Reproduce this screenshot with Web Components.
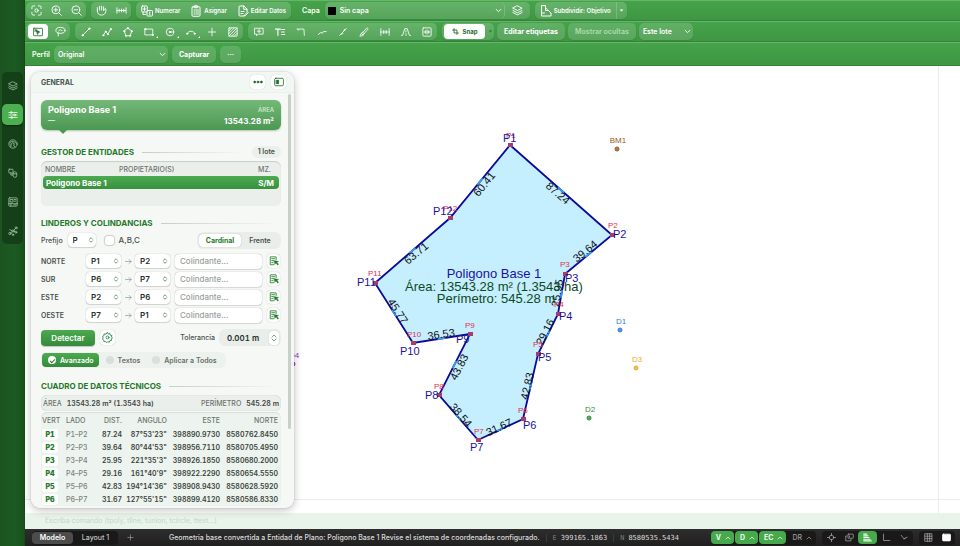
<!DOCTYPE html>
<html lang="es">
<head>
<meta charset="utf-8">
<meta name="viewport" content="width=device-width, initial-scale=1">
<title>Poligono Base 1</title>
<style>
  html, body { height: 100%; margin: 0; }
  body { font-family: Inter, "Liberation Sans", sans-serif; font-size: 7px; color: #3b423d; overflow: hidden; }
</style>
</head>
<body>
<app-shell></app-shell>
<script>
const RESET = `
  * { box-sizing: border-box; }
  button, input, select { font: inherit; color: inherit; margin: 0; padding: 0; border: 0; background: none; outline: none; }
  button { cursor: pointer; }
`;

const ICONS = {
  focus: '<path d="M2 8V5a3 3 0 0 1 3-3h3M16 2h3a3 3 0 0 1 3 3v3M22 16v3a3 3 0 0 1-3 3h-3M8 22H5a3 3 0 0 1-3-3v-3"/><circle cx="12" cy="12" r="3.6"/>',
  zoomin: '<circle cx="10.5" cy="10.5" r="8.5"/><path d="M17 17l5.500 5.500M10.500 6.500v8M6.500 10.500h8"/>',
  zoomout: '<circle cx="10.5" cy="10.5" r="8.5"/><path d="M17 17l5.500 5.500M6.500 10.500h8"/>',
  hand: '<path d="M3 13V5.500M7.800 11V3M12.200 11V2.500M16.600 11V4M3 12c0 7 3 10 9 10 5 0 9-3 9.500-8V8.500c-2-1.500-3.500 0-4.900 3.500"/>',
  measure: '<path d="M2 6v12M22 6v12M3 12h18M7 9v6M12 9v6M17 9v6"/>',
  number: '<rect x="1.500" y="2" width="11" height="12" rx="1.500"/><rect x="12" y="11" width="11" height="11" rx="1.500"/><path d="M7 5v6M4.500 8h5M17.500 14v5M4 14v5h5"/>',
  assign: '<rect x="4" y="3.500" width="16" height="19" rx="2"/><path d="M9 1.500h6v4H9zM8 10h2M12 10h5M8 14h2M12 14h5M8 18h2M12 18h5"/>',
  editdoc: '<path d="M20 13V8l-6-6H6a2 2 0 0 0-2 2v16a2 2 0 0 0 2 2h8M13.500 2v6.500H20M8 13h6M8 17h4M15 20l6-6 1.500 1.500-6 6H15z"/>',
  chevron: '<path d="M4 8l8 8 8-8"/>',
  up: '<path d="M4 16l8-8 8 8"/>',
  caret: '<path d="M3 7h18l-9 10z" fill="currentColor" stroke="none"/>',
  updown: '<path d="M6 9l6-6 6 6M6 15l6 6 6-6"/>',
  layers: '<path d="M12 2l10 5-10 5L2 7zM2 12l10 5 10-5M2 16.500l10 5 10-5"/>',
  subdivide: '<path d="M3 2v20h19v-6L11 5.500V2zM3 16h6M11 6v5h5"/>',
  select: '<rect x="1" y="3" width="22" height="18" rx="1.500"/><path d="M5 7h4M5 7v4"/><path d="M8 8l8 4-3.500 1.200L11.500 17z" fill="currentColor"/>',
  lasso: '<ellipse cx="12" cy="9.500" rx="10" ry="6.500"/><path d="M7 15c-2 3 2 3 0 7M8 10.500c3-3 6-3 8 0"/>',
  line: '<path d="M4 20L20 4"/><circle cx="4" cy="20" r="1.800" fill="currentColor"/><circle cx="20" cy="4" r="1.800" fill="currentColor"/>',
  polyline: '<path d="M3 20l6-9 5 6 7-12"/><circle cx="3" cy="20" r="1.500" fill="currentColor"/><circle cx="9" cy="11" r="1.500" fill="currentColor"/><circle cx="14" cy="17" r="1.500" fill="currentColor"/><circle cx="21" cy="5" r="1.500" fill="currentColor"/>',
  polygon: '<path d="M12 3l9 7-4 11H7L3 10z"/><circle cx="12" cy="3" r="1.600" fill="currentColor"/><circle cx="21" cy="10" r="1.600" fill="currentColor"/><circle cx="3" cy="10" r="1.600" fill="currentColor"/><circle cx="7" cy="21" r="1.600" fill="currentColor"/><circle cx="17" cy="21" r="1.600" fill="currentColor"/>',
  rect: '<path d="M3 5h18v14H3z"/><circle cx="3" cy="5" r="1.600" fill="currentColor"/><circle cx="21" cy="19" r="1.600" fill="currentColor"/>',
  circle: '<circle cx="12" cy="12" r="9"/><path d="M12 12h9"/><circle cx="12" cy="12" r="2" fill="currentColor"/>',
  arc: '<path d="M3 16c2-8 16-8 18 0"/><circle cx="3" cy="16" r="1.600" fill="currentColor"/><circle cx="21" cy="16" r="1.600" fill="currentColor"/>',
  cross: '<path d="M12 3v18M3 12h18"/>',
  hatch: '<rect x="2" y="2" width="20" height="20" rx="1"/><path d="M2 9l7-7M2 15.500L15.500 2M2 22L22 2M8.500 22L22 8.500M15 22l7-7"/>',
  comment: '<path d="M2 3h20v14H10l-4 4v-4H2zM12 6v8M8 10h8"/>',
  text: '<path d="M1 5h12M7 5v15M16 6h7M16 12h6M16 18h7" stroke-width="2.600"/>',
  corner: '<path d="M3 5h16l1 15M3 5l3 3"/>',
  extend: '<path d="M3 18l6-5 4 2 2-4h7"/>',
  slash: '<path d="M4 20L20 4M9 18l3-3M14 8l3-3"/>',
  brush: '<path d="M9 13l9-10c2-1.500 4.500.5 3 3L12 16M9 13l3 3-3 5-7 1 3-6zM6 15l3 4"/>',
  align: '<path d="M2 4v16M22 4v16M2 12h20M9 8v8M15 8v8"/>',
  road: '<path d="M1 20h3L9 4h2M23 20h-3L15 4h-2M12 9v3M12 16v4"/>',
  distribute: '<rect x="2" y="2" width="20" height="20" rx="2"/><path d="M12 7v10M5 12h5M14 12h5M8 9v6M16 9v6"/>',
  snap: '<path d="M7 2v15h15M2 7h15v15" stroke-width="3"/>',
  dots: '<circle cx="4" cy="12" r="2.200" fill="currentColor"/><circle cx="12" cy="12" r="2.200" fill="currentColor"/><circle cx="20" cy="12" r="2.200" fill="currentColor"/>',
  sliders: '<path d="M2 6h20M2 12h20M2 18h20"/><circle cx="8" cy="6" r="2.300"/><circle cx="16" cy="12" r="2.300"/><circle cx="9" cy="18" r="2.300"/>',
  globe: '<circle cx="12" cy="12" r="10"/><path d="M4 9c4-4 12-4 16 1M7 13l4-4 5 3-3 2 3 5M7 12v7"/>',
  shapes: '<rect x="2" y="3" width="10" height="9" rx="1"/><path d="M12 14h9v4a4 4 0 0 1-9 0zM13 14v-3a4 4 0 0 1 7 0v3M7 12v5h4"/>',
  board: '<rect x="2" y="2" width="20" height="20" rx="1.500"/><path d="M6 6h6v6H6zM15 6h4M15 10h4M2 16h20M7 16v6M14 19h5"/>',
  nodes: '<circle cx="4.500" cy="18" r="2.800"/><circle cx="12" cy="12" r="2.600"/><circle cx="19.500" cy="4.500" r="2.400"/><circle cx="19" cy="15" r="2.200"/><circle cx="12" cy="21" r="1.800"/><path d="M7 16l3-2M14 10l4-4M14.500 13l2.500 1M4 9l5 2"/>',
  panel: '<rect x="1.500" y="3" width="21" height="18" rx="3"/><path d="M6 8h5v8H6z" fill="currentColor"/>',
  pick: '<path d="M17 9V2H3v19h8M6.500 6.500h7M6.500 11h4M6.500 16h3"/><path d="M12 11l11 2-4 2 4 5-2 2-4-5-3 3z" fill="currentColor" stroke-width="1"/>',
  gear: '<circle cx="12" cy="12" r="3.200"/><path d="M12 1.500l2 3 3.500-1.200.6 3.600 3.700.8-1.300 3.400L23 13l-3 2 .8 3.500-3.600.3L16 22.300 12.500 21 10 23.500l-2-3-3.500.8-.5-3.600-3-1.700 1.500-3.300L1 9.500l3.300-1.600.2-3.700 3.700.4z"/>',
  arrow: '<path d="M2 12h19M14 5l7 7-7 7"/>',
  plus: '<path d="M12 3v18M3 12h18"/>',
  target: '<circle cx="12" cy="12" r="6"/><path d="M12 1v6M12 17v6M1 12h6M17 12h6"/>',
  copies: '<rect x="8" y="3" width="14" height="11" rx="1"/><path d="M5 8H2v13h14v-4M12 8v3"/>',
  stack: '<path d="M2 3h8M2 7.500h11M2 12h14M2 16.500h17M2 21h20" stroke-width="3"/>',
  ortho: '<path d="M4 3v17h17"/>',
  polar: '<path d="M3 6l8 10 8-5M11 16l3-3"/>',
  grid: '<path d="M3 2h18v20H3zM3 8.500h18M3 15h18M9 2v20M15 2v20"/>',
  screen: '<rect x="1" y="3" width="22" height="18" rx="3" fill="currentColor"/>'
};

class UiIcon extends HTMLElement {
  connectedCallback() {
    this.attachShadow({ mode: 'open' }).innerHTML = `
      <style>
        :host { display: inline-block; flex: none; width: var(--icon-size, 12px); height: var(--icon-size, 12px); }
        svg { display: block; width: 100%; height: 100%; fill: none; stroke: currentColor; stroke-width: var(--icon-stroke, 2); stroke-linecap: round; stroke-linejoin: round; }
      </style>
      <svg viewBox="0 0 24 24" aria-hidden="true">${ICONS[this.getAttribute('name')]}</svg>`;
  }
}

class ToolRow extends HTMLElement {
  connectedCallback() {
    this.attachShadow({ mode: 'open' }).innerHTML = `
      <style>
        :host { display: flex; box-sizing: border-box; align-items: center; gap: 5px; height: 21px; padding-left: 1px; color: #fff;
                background: linear-gradient(#45a34a, #3f9644); border-top: 1px solid #66b569; border-bottom: 1px solid #34853a; }
        :host([tall]) { height: 24px; gap: 4px; }
      </style><slot></slot>`;
  }
}

class ToolGroup extends HTMLElement {
  connectedCallback() {
    this.attachShadow({ mode: 'open' }).innerHTML = `
      <style>
        :host { display: flex; align-items: stretch; height: 17px; border-radius: 5px;
                background: linear-gradient(#ffffff2e, #ffffff1f); box-shadow: 0 1px 1px #1b5e2030; }
        :host([plain]) { background: none; box-shadow: none; gap: 3px; }
      </style><slot></slot>`;
  }
}

class ToolButton extends HTMLElement {
  connectedCallback() {
    const icon = this.getAttribute('icon');
    const label = this.getAttribute('label');
    this.attachShadow({ mode: 'open' }).innerHTML = `
      <style>${RESET}
        :host { display: flex; flex: none; position: relative; width: 20px; --icon-size: 11px; }
        :host([w21]) { width: 21px; --icon-size: 10px; }
        :host([wide]) { width: 25px; }
        :host([labelled]) { width: auto; --icon-size: 12px; }
        :host([chip]) { width: auto; height: 17px; border-radius: 5px; background: #ffffff26; box-shadow: 0 1px 1px #1b5e2030; }
        :host([muted]) { color: #a9d6ab; }
        :host([slim]) { width: 11px; --icon-size: 5px; border-left: 1px solid #ffffff30; }
        :host([dim]) { width: 7px; --icon-size: 5px; color: #2c7a33; }
        :host([active]) { width: auto; margin: 1px 2px; --icon-size: 10px; }
        button { flex: 1; display: flex; align-items: center; justify-content: center; gap: 3px; white-space: nowrap; }
        :host([labelled]) button { padding: 0 5px; font-size: 6px; font-weight: 600; gap: 2px; }
        :host([chip]) button { padding: 0 7px; font-size: 7px; font-weight: 700; }
        :host([active]) button { width: 20px; background: #fff; color: #1f6b28; border-radius: 4px; }
        :host([active][labelled]) button { width: 41px; padding: 0; --icon-size: 7px; gap: 4px; font-weight: 700; }
        i { position: absolute; right: 1px; bottom: 2px; border: 1px solid transparent; border-right-color: currentColor; border-bottom-color: currentColor; }
      </style>
      <button type="button" aria-label="${label}">${icon ? `<ui-icon name="${icon}"></ui-icon>` : ''}${this.hasAttribute('labelled') || (this.hasAttribute('chip') && !icon) ? `<span>${label}</span>` : ''}</button>
      ${this.hasAttribute('more') ? '<i></i>' : ''}`;
  }
}

class DropDown extends HTMLElement {
  connectedCallback() {
    const panel = this.hasAttribute('panel');
    this.attachShadow({ mode: 'open' }).innerHTML = `
      <style>${RESET}
        :host { display: flex; box-sizing: border-box; align-items: center; position: relative; height: 17px; border-radius: 5px; font-weight: 600; --icon-size: 7px; --icon-stroke: 3; }
        :host([chip]) { background: #ffffff26; box-shadow: 0 1px 1px #1b5e2030; }
        :host([panel]) { height: 14px; border-radius: 4px; background: #fff; color: #26302a; font-size: 8px; --icon-size: 6px; box-shadow: 0 0 1px #00000060, 0 1px 1px #00000020; }
        select { appearance: none; flex: 1; min-width: 0; height: 100%; padding: 0 12px 0 4px; }
        :host([panel]) select { padding: 0 10px 0 5px; }
        option { color: #222; }
        ui-icon { position: absolute; right: 2px; pointer-events: none; }
        :host([panel]) ui-icon { color: #2e7d32; }
      </style>
      <slot></slot>
      <select aria-label="${this.getAttribute('label')}"><option>${this.getAttribute('value')}</option></select>
      <ui-icon name="${panel ? 'updown' : 'chevron'}"></ui-icon>`;
  }
}

class SideRail extends HTMLElement {
  connectedCallback() {
    const items = [['layers', 'Capas'], ['sliders', 'Propiedades'], ['globe', 'Mapa'], ['shapes', 'Formas'], ['board', 'Lámina'], ['nodes', 'Puntos']];
    this.attachShadow({ mode: 'open' }).innerHTML = `
      <style>${RESET}
        :host { display: block; background: linear-gradient(90deg, #1b5420, #1c5a22 60%, #19501e); padding: 72px 2px 0; box-shadow: inset -1px 0 0 #174a1b; }
        nav { display: grid; gap: 8px; padding: 3px 0; border-radius: 5px; background: #153f19; justify-items: center; }
        button { width: 21px; height: 21px; display: grid; place-items: center; border-radius: 5px; color: #a5c9a7; --icon-size: 10px; --icon-stroke: 1.800; }
        button.on { background: #4caf50; color: #effbef; box-shadow: 0 1px 2px #0006; }
      </style>
      <nav>${items.map(([n, t], i) => `<button type="button" class="${i === 1 ? 'on' : ''}" aria-label="${t}"><ui-icon name="${n}"></ui-icon></button>`).join('')}</nav>`;
  }
}

class SurveyPlan extends HTMLElement {
  connectedCallback() {
    /* vertex: x, y, blue tag x/y, red tag x/y */
    const V = [
      [510, 145, 503, 142, 506, 138], [612, 235, 613, 238, 608, 228], [565, 274, 565, 282, 560, 267], [558, 314, 559, 320, 554, 307],
      [538, 354, 538, 361, 533, 347], [523, 419, 523, 429, 518, 413], [478, 440, 470, 451, 474, 434], [439, 395, 425, 399, 434, 389],
      [470, 334, 456, 343, 465, 328], [413, 343, 400, 355, 407, 337], [375, 283, 357, 286, 368, 276], [450, 218, 433, 215, 443, 211]
    ];
    const D = [
      ['87.24', 558, 193, 41], ['39.64', 585, 251, -39], ['25.95', 557, 293, -81], ['29.16', 545, 332, -63], ['42.83', 527, 386, -77], ['31.67', 499, 427, -25],
      ['38.54', 461, 415, 49], ['43.83', 459, 367, -63], ['36.53', 441, 334, -8], ['45.77', 398, 311, 57], ['63.71', 416, 253, -40], ['60.41', 484, 184, -51]
    ];
    const M = [['BM1', 617, 149, '#9b5a28'], ['D1', 620, 330, '#2f7de0'], ['D3', 636, 368, '#f0aa2c'], ['D2', 589, 418, '#2f9138'], ['D4', 293, 364, '#9a2fc0']];
    const glow = V.map((a, i) => {
      const b = V[(i + 1) % 12], mx = (a[0] + b[0]) / 2, my = (a[1] + b[1]) / 2, L = Math.hypot(b[0] - a[0], b[1] - a[1]);
      const ux = (b[0] - a[0]) / L * 4, uy = (b[1] - a[1]) / L * 4;
      return `<path d="M${mx - ux} ${my - uy}L${mx + ux} ${my + uy}"/>`;
    }).join('');
    this.attachShadow({ mode: 'open' }).innerHTML = `
      <style>
        :host { display: block; background: #fff; overflow: hidden; }
        svg { display: block; width: 100%; height: 100%; font-family: "Liberation Sans", Arial, sans-serif; }
        .dim { font-size: 11px; fill: #111; text-anchor: middle; }
        .blue { font-size: 11px; fill: #1a149c; }
        .red { font-size: 8px; fill: #e0304f; }
        .mark { font-size: 8px; text-anchor: middle; }
        .title { font-size: 13px; text-anchor: middle; }
      </style>
      <svg role="img" aria-label="Plano"><g transform="translate(-25 -66)">
        <path d="M25 499.500H4000M938.500 66V4000" stroke="#e9eeea" fill="none"/>
        <path d="M${V.map(v => v[0] + ' ' + v[1]).join('L')}Z" fill="#c5eefe" stroke="#0b0b9a" stroke-width="1.800"/>
        <g stroke="#38a0f2" stroke-width="1.800">${glow}</g>
        ${V.map(v => `<rect x="${v[0] - 2}" y="${v[1] - 2}" width="5" height="4" fill="#a83c68"/>`).join('')}
        ${D.map(d => `<text class="dim" transform="translate(${d[1]} ${d[2]}) rotate(${d[3]})" y="4">${d[0]}</text>`).join('')}
        <text class="title" x="494" y="278" fill="#1a149c">Poligono Base 1</text>
        <text class="title" x="494" y="291" fill="#0d4a1c">Área: 13543.28 m² (1.3543 ha)</text>
        <text class="title" x="496" y="303" fill="#0d4a1c">Perímetro: 545.28 m</text>
        ${V.map((v, i) => `<text class="red" x="${v[4]}" y="${v[5]}">P${i + 1}</text><text class="blue" x="${v[2]}" y="${v[3]}">P${i + 1}</text>`).join('')}
        ${M.map(m => `<circle cx="${m[1]}" cy="${m[2]}" r="2" fill="${m[3]}" fill-opacity=".8" stroke="${m[3]}" stroke-width="1"/><text class="mark" x="${m[1] + 1}" y="${m[2] - 6}" fill="${m[3]}">${m[0]}</text>`).join('')}
      </g></svg>`;
  }
}

class SectionTitle extends HTMLElement {
  connectedCallback() {
    this.attachShadow({ mode: 'open' }).innerHTML = `
      <style>
        :host { display: flex; align-items: center; gap: 8px; height: 12px; }
        h2 { margin: 0; font-size: 8px; line-height: 12px; font-weight: 700; color: #1f7a2a; }
        hr { flex: 1; height: 1px; margin: 0; border: 0; background: linear-gradient(90deg, #c3d0c6, #c3d0c600); }
      </style><h2>${this.getAttribute('heading')}</h2><hr><slot></slot>`;
  }
}

class EntityCard extends HTMLElement {
  connectedCallback() {
    this.attachShadow({ mode: 'open' }).innerHTML = `
      <style>
        :host { display: grid; box-sizing: border-box; grid-template-columns: 1fr auto; align-items: center; position: relative; height: 30px; padding: 4px 7px; border-radius: 6px; color: #fff;
                background: linear-gradient(#74b878, #4b9852); box-shadow: 0 1px 2px #1b5e2050; }
        :host::after { content: ""; position: absolute; left: 18px; top: 30px; border: 4px solid transparent; border-top-color: #4b9852; border-bottom: 0; }
        b { font-size: 9px; line-height: 12px; }
        small { font-size: 6px; line-height: 12px; color: #d9eedb; text-align: right; }
        span { font-size: 7px; line-height: 10px; }
        strong { font-size: 8px; line-height: 10px; text-align: right; }
      </style><b>Poligono Base 1</b><small>ÁREA</small><span>—</span><strong>13543.28 m²</strong>`;
  }
}

class EntityList extends HTMLElement {
  connectedCallback() {
    this.attachShadow({ mode: 'open' }).innerHTML = `
      <style>${RESET}
        :host { display: block; box-sizing: border-box; height: 45px; margin-top: 3px; padding: 1px 2px; border-radius: 6px; background: #ebefec; box-shadow: inset 0 1px 1px #00000025; }
        table { width: 100%; border-collapse: separate; border-spacing: 0; table-layout: fixed; }
        th { height: 14px; padding: 0 0 0 2px; font-size: 7px; font-weight: 500; text-align: left; color: #6b746d; }
        th:last-child { text-align: right; padding-right: 8px; }
        td { height: 13px; padding: 0 3px; font-size: 8px; line-height: 10px; font-weight: 700; color: #fff; background: linear-gradient(#4caa50, #37903d); }
        td:first-child { border-radius: 4px 0 0 4px; } td:last-child { border-radius: 0 4px 4px 0; text-align: right; padding-right: 5px; }
        .a { width: 74px; } .c { width: 50px; }
      </style>
      <table><thead><tr><th class="a">NOMBRE</th><th>PROPIETARIO(S)</th><th class="c">MZ.</th></tr></thead>
      <tbody><tr><td colspan="2">Poligono Base 1</td><td>S/M</td></tr></tbody></table>`;
  }
}

class BoundaryRow extends HTMLElement {
  connectedCallback() {
    const side = this.getAttribute('side');
    this.attachShadow({ mode: 'open' }).innerHTML = `
      <style>${RESET}
        :host { display: grid; grid-template-columns: 45px 35px 14px 35px 5px 1fr 5px 13px 1px; align-items: center; height: 18px; }
        b { font-weight: 600; }
        .arrow { justify-self: center; color: #7b837d; --icon-size: 7px; }
        input { grid-column: 6; height: 15px; width: 100%; padding: 0 5px; border-radius: 4px; background: #fff; font-size: 8px; box-shadow: 0 0 1px #00000070, 0 1px 1px #00000018; }
        input::placeholder { color: #9aa09b; opacity: 1; }
        button { grid-column: 8; height: 14px; display: grid; place-items: center; border-radius: 4px; background: #fff; color: #1f7a2a; --icon-size: 10px; box-shadow: 0 0 1px #00000050; }
      </style>
      <b>${side}</b>
      <drop-down panel label="${side} desde" value="${this.getAttribute('from')}"></drop-down>
      <ui-icon class="arrow" name="arrow"></ui-icon>
      <drop-down panel label="${side} hasta" value="${this.getAttribute('to')}"></drop-down>
      <input type="text" placeholder="Colindante..." aria-label="Colindante ${side}">
      <button type="button" aria-label="Elegir ${side}"><ui-icon name="pick"></ui-icon></button>`;
  }
}

class TechTable extends HTMLElement {
  connectedCallback() {
    const rows = [
      ['P1', 'P1–P2', '87.24', '87°53\'23"', '398890.9730', '8580762.8450'],
      ['P2', 'P2–P3', '39.64', '80°44\'53"', '398956.7110', '8580705.4950'],
      ['P3', 'P3–P4', '25.95', '221°35\'3"', '398926.1850', '8580680.2000'],
      ['P4', 'P4–P5', '29.16', '161°40\'9"', '398922.2290', '8580654.5550'],
      ['P5', 'P5–P6', '42.83', '194°14\'36"', '398908.9430', '8580628.5920'],
      ['P6', 'P6–P7', '31.67', '127°55\'15"', '398899.4120', '8580586.8330']
    ];
    this.attachShadow({ mode: 'open' }).innerHTML = `
      <style>${RESET}
        :host { display: block; padding: 1px 3px 0 1px; border-radius: 6px; background: #edf3ee; box-shadow: inset 0 1px 1px #00000018; font-variant-numeric: tabular-nums; }
        table { width: 100%; table-layout: fixed; border-collapse: separate; border-spacing: 0; }
        th { height: 15px; padding: 0; font-weight: 500; color: #6b746d; text-align: right; }
        td { height: 13px; padding: 0; font-weight: 600; text-align: right; white-space: nowrap; color: #39423b; }
        th:nth-child(-n+2), td:nth-child(-n+2) { text-align: left; }
        td:nth-child(2) { color: #7b837d; font-weight: 500; }
        td b { display: block; width: 16px; line-height: 11px; border-radius: 3px; background: #fff; color: #1f7a2a; text-align: center; }
        col:nth-child(1) { width: 24px; } col:nth-child(2) { width: 28px; } col:nth-child(3) { width: 28px; } col:nth-child(4) { width: 45px; } col:nth-child(5) { width: 53px; }
      </style>
      <table><colgroup><col><col><col><col><col><col></colgroup>
      <thead><tr><th>VERT</th><th>LADO</th><th>DIST.</th><th>ANGULO</th><th>ESTE</th><th>NORTE</th></tr></thead>
      <tbody>${rows.map(r => `<tr>${r.map((c, i) => i ? `<td>${c}</td>` : `<td><b>${c}</b></td>`).join('')}</tr>`).join('')}</tbody></table>`;
  }
}

class InfoPanel extends HTMLElement {
  connectedCallback() {
    this.attachShadow({ mode: 'open' }).innerHTML = `
      <style>${RESET}
        :host { display: flex; flex-direction: column; overflow: hidden; border-radius: 9px; background: #f6f8f6f5; box-shadow: 0 0 1px #00000060, 0 2px 8px #00000040; font-weight: 500; color: #4a524c; }
        header { flex: none; display: flex; align-items: center; gap: 6px; height: 21px; padding: 0 8px 0 10px; background: #f1f8f3; border-bottom: 1px solid #eaf0eb; }
        h1 { flex: 1; margin: 0; font-size: 7px; font-weight: 700; }
        header button { width: 15px; height: 14px; display: grid; place-items: center; border-radius: 4px; background: #fff; color: #1f6b28; box-shadow: 0 0 1px #00000040; --icon-size: 10px; }
        main { flex: 1; min-height: 0; display: flex; position: relative; }
        .body { flex: 1; min-width: 0; padding: 7px 4px 0 10px; overflow: hidden; }
        .thumb { flex: none; width: 3px; height: 335px; margin: 1px 3px 0; border-radius: 2px; background: #c8d0ca; }
        .badge { padding: 0 6px; border-radius: 6px; background: #ebf0ec; line-height: 12px; font-weight: 600; }
        .row { display: flex; align-items: center; }
        .fill { flex: 1; }
        section > section-title { margin-top: 11px; }
        .first section-title { margin-top: 16px; }
        .tech section-title { margin-top: 12px; }
        .prefix { height: 18px; margin-top: 2px; }
        .prefix drop-down { width: 28px; margin: 0 8px 0 5px; }
        label { display: flex; align-items: center; }
        .box { appearance: none; width: 9px; height: 9px; margin: 0 5px 0 1px; border-radius: 3px; background: #fff; box-shadow: 0 0 1px 1px #0000002a; }
        .big { font-size: 8px; }
        .seg { display: flex; align-items: center; height: 17px; padding: 2px; border-radius: 6px; background: #e9eeea; font-weight: 600; }
        .seg button { height: 13px; border-radius: 4px; width: 38px; }
        .seg button[aria-pressed=true] { width: 42px; background: #fff; color: #1f7a2a; font-weight: 700; box-shadow: 0 0 1px #00000060; }
        .sides { padding-top: 3px; }
        .detect { margin-top: 5px; height: 17px; }
        .go { width: 54px; height: 16px; border-radius: 4px; background: linear-gradient(#4caa50, #348a3a); color: #fff; font-size: 8px; font-weight: 600; box-shadow: 0 1px 1px #0003; }
        .gear { width: 15px; height: 15px; margin-left: 5px; display: grid; place-items: center; border-radius: 4px; background: #fff; color: #2e8b50; --icon-size: 11px; box-shadow: 0 0 1px #00000060; }
        .tol { gap: 4px; }
        .step { display: flex; align-items: center; height: 17px; padding-right: 2px; border-radius: 6px; background: #e9eeea; font-variant-numeric: tabular-nums; }
        .step input { width: 50px; padding-left: 8px; font-size: 8px; font-weight: 600; color: #26302a; }
        .step button { width: 10px; height: 14px; display: grid; place-items: center; border-radius: 3px; background: #fff; color: #2e7d32; --icon-size: 8px; box-shadow: 0 0 1px #00000050; }
        .modes { display: inline-flex; margin-top: 6px; height: 16px; padding: 0 3px 0 1px; border-radius: 6px; background: #eef2ef; font-weight: 600; color: #667068; }
        .modes label { padding: 0 6px; height: 14px; }
        .modes label.on { padding: 0 5px 0 6px; margin-right: 1px; border-radius: 4px; background: linear-gradient(#4caa50, #348a3a); color: #fff; }
        .modes input { appearance: none; display: grid; place-items: center; width: 8px; height: 8px; margin-right: 4px; border-radius: 50%; background: #d9dfda; }
        .modes input:checked { background: #fff; }
        .modes input:checked::after { content: ""; width: 4px; height: 2px; border: solid #2e7d32; border-width: 0 0 1px 1px; transform: rotate(-45deg); }
        .sum { justify-content: space-between; height: 16px; margin: 3px 0 1px; padding: 0 2px; border-radius: 6px; background: #ebefec; box-shadow: inset 0 0 1px #00000040; font-variant-numeric: tabular-nums; }
        .sum span { color: #6b746d; margin-right: 5px; }
        .sum b { font-weight: 600; color: #3b443d; }
      </style>
      <header><h1>GENERAL</h1>
        <button type="button" aria-label="Más"><ui-icon name="dots"></ui-icon></button>
        <button type="button" aria-label="Acoplar"><ui-icon name="panel"></ui-icon></button>
      </header>
      <main><div class="body">
        <entity-card></entity-card>
        <section class="first"><section-title heading="GESTOR DE ENTIDADES"><span class="badge">1 lote</span></section-title></section>
        <entity-list></entity-list>
        <section><section-title heading="LINDEROS Y COLINDANCIAS"></section-title>
          <div class="row prefix"><span>Prefijo</span><drop-down panel label="Prefijo" value="P"></drop-down>
            <label class="big"><input class="box" type="checkbox">A,B,C</label>
            <span class="fill"></span>
            <div class="seg"><button type="button" aria-pressed="true">Cardinal</button><button type="button" aria-pressed="false">Frente</button></div></div>
          <div class="sides">
            <boundary-row side="NORTE" from="P1" to="P2"></boundary-row>
            <boundary-row side="SUR" from="P6" to="P7"></boundary-row>
            <boundary-row side="ESTE" from="P2" to="P6"></boundary-row>
            <boundary-row side="OESTE" from="P7" to="P1"></boundary-row>
          </div>
          <div class="row detect"><button class="go" type="button">Detectar</button><button class="gear" type="button" aria-label="Ajustes"><ui-icon name="gear"></ui-icon></button>
            <span class="fill"></span>
            <label class="tol">Tolerancia <span class="step"><input type="text" value="0.001 m"><button type="button" aria-label="Cambiar tolerancia"><ui-icon name="updown"></ui-icon></button></span></label></div>
          <div class="row modes"><label class="on"><input type="checkbox" checked>Avanzado</label><label><input type="checkbox">Textos</label><label><input type="checkbox">Aplicar a Todos</label></div>
        </section>
        <section class="tech"><section-title heading="CUADRO DE DATOS TÉCNICOS"></section-title>
          <div class="row sum"><div><span>ÁREA</span><b>13543.28 m² (1.3543 ha)</b></div><div><span>PERÍMETRO</span><b>545.28 m</b></div></div>
          <tech-table></tech-table>
        </section>
      </div><div class="thumb"></div></main>`;
  }
}

class StatusBar extends HTMLElement {
  connectedCallback() {
    const mode = (t, on) => `<button type="button" class="${on ? 'mode on' : 'mode'}"><span>${t}</span><ui-icon name="up"></ui-icon></button>`;
    const tool = (n, t, cls = '') => `<button type="button" class="tool ${cls}" aria-label="${t}"><ui-icon name="${n}"></ui-icon></button>`;
    this.attachShadow({ mode: 'open' }).innerHTML = `
      <style>${RESET}
        :host { display: flex; box-sizing: border-box; align-items: center; height: 17px; padding: 0 5px 0 7px; background: linear-gradient(#2d2d2d, #202020); color: #dcdcdc; font-weight: 500; white-space: nowrap; --icon-size: 9px; }
        .set { display: flex; align-items: center; height: 14px; border-radius: 4px; background: #191919; }
        .tab { width: 45px; height: 12px; border-radius: 4px; color: #c6c6c6; }
        .tab.on { width: 41px; background: #4c4c4c; color: #fff; font-weight: 600; }
        .add { width: 24px; display: grid; place-items: center; --icon-size: 7px; color: #aaa; }
        .msg { margin-left: 27px; }
        .pos { display: flex; align-items: center; gap: 4px; margin-left: 6px; padding-left: 6px; border-left: 1px solid #3b3b3b; font-family: "DejaVu Sans Mono", monospace; line-height: 8px; }
        .pos i { font-style: normal; color: #7d7d7d; }
        .gap { flex: 1; }
        .mode { display: flex; align-items: center; gap: 4px; height: 13px; margin-right: 1px; padding: 0 3px 0 5px; border-radius: 4px; color: #9a9a9a; --icon-size: 6px; --icon-stroke: 3; }
        .mode.on { background: #46a94b; color: #effbef; font-weight: 700; }
        .tool { width: 18px; height: 13px; display: grid; place-items: center; border-radius: 4px; color: #a5a5a5; }
        .tool.on { width: 19px; background: #46a94b; color: #effbef; }
        .tool.lit { color: #fff; }
        .gapset { margin: 0 6px; }
      </style>
      <div class="set"><button type="button" class="tab on">Modelo</button><button type="button" class="tab">Layout 1</button></div>
      <button type="button" class="add" aria-label="Nuevo"><ui-icon name="plus"></ui-icon></button>
      <span class="msg">Geometria base convertida a Entidad de Plano: Poligono Base 1 Revise el sistema de coordenadas configurado.</span>
      <span class="pos"><i>E</i>399165.1863</span><span class="pos"><i>N</i>8580535.5434</span>
      <span class="gap"></span>
      <div class="set">${mode('V', 1)}${mode('D', 1)}${mode('EC', 1)}${mode('DR')}</div>
      <div class="set gapset">${tool('target', 'Referencia')}${tool('copies', 'Ciclo')}${tool('stack', 'Grosor', 'on')}${tool('ortho', 'Orto')}${tool('polar', 'Polar')}</div>
      <div class="set">${tool('grid', 'Rejilla')}${tool('screen', 'Fondo', 'lit')}</div>`;
  }
}

class AppShell extends HTMLElement {
  connectedCallback() {
    const btns = (list, w) => list.map(n => {
      const more = n.endsWith('+'), name = more ? n.slice(0, -1) : n;
      return `<tool-button ${w} icon="${name}" label="${name}" ${more ? 'more' : ''}></tool-button>`;
    }).join('');
    this.attachShadow({ mode: 'open' }).innerHTML = `
      <style>${RESET}
        :host { display: grid; grid-template-columns: 25px 1fr; height: 100vh; }
        .work { display: grid; grid-template-rows: auto 1fr auto auto; min-width: 0; }
        .lbl { font-weight: 600; margin-left: 6px; }
        .swatch { width: 8px; height: 8px; margin-left: 3px; background: #000; }
        .layer { width: 180px; border-right: 1px solid #ffffff30; }
        .scope { width: 54px; } .profile { width: 114px; }
        .stage { position: relative; min-height: 0; }
        survey-plan { position: absolute; inset: 0; }
        info-panel { position: absolute; left: 6px; top: 6px; bottom: 5px; width: 263px; }
        .cmd { height: 16px; padding: 0 20px; background: #e8f3ea; }
        .cmd input { display: block; width: 100%; height: 14px; color: #24532a; }
        .cmd input::placeholder { color: #c6d6c9; opacity: 1; }
      </style>
      <side-rail></side-rail>
      <div class="work">
        <div class="bars">
          <tool-row>
            <tool-group>${btns(['focus', 'zoomin', 'zoomout'], '')}</tool-group>
            <tool-group>${btns(['hand', 'measure'], '')}</tool-group>
            <tool-group><tool-button labelled icon="number" label="Numerar"></tool-button><tool-button labelled icon="assign" label="Asignar"></tool-button><tool-button labelled icon="editdoc" label="Editar Datos"></tool-button></tool-group>
            <span class="lbl">Capa</span>
            <tool-group><drop-down class="layer" label="Capa" value="Sin capa"><span class="swatch"></span></drop-down>${btns(['layers'], 'wide')}</tool-group>
            <tool-group><tool-button labelled icon="subdivide" label="Subdividir: Objetivo"></tool-button><tool-button slim icon="caret" label="Opciones de subdividir"></tool-button></tool-group>
          </tool-row>
          <tool-row>
            <tool-group><tool-button active icon="select" label="Seleccionar"></tool-button><tool-button icon="lasso" label="Lazo"></tool-button></tool-group>
            <tool-group>${btns(['line', 'polyline', 'polygon', 'rect+', 'circle+', 'arc+', 'cross', 'hatch'], 'w21')}</tool-group>
            <tool-group>${btns(['comment', 'text', 'corner', 'extend', 'slash', 'brush', 'align', 'road', 'distribute'], 'w21')}</tool-group>
            <tool-group plain>
              <tool-group><tool-button active labelled icon="snap" label="Snap"></tool-button><tool-button dim icon="caret" label="Opciones de snap"></tool-button></tool-group>
              <tool-button chip label="Editar etiquetas"></tool-button>
              <tool-button chip muted label="Mostrar ocultas"></tool-button>
              <drop-down chip class="scope" label="Ámbito" value="Este lote"></drop-down>
            </tool-group>
          </tool-row>
          <tool-row tall>
            <span class="lbl">Perfil</span>
            <drop-down chip class="profile" label="Perfil" value="Original"></drop-down>
            <tool-button chip label="Capturar"></tool-button>
            <tool-button chip label="···"></tool-button>
          </tool-row>
        </div>
        <div class="stage"><survey-plan></survey-plan><info-panel></info-panel></div>
        <div class="cmd"><input type="text" aria-label="Comando" placeholder="Escriba comando (tpoly, tline, tunion, tcircle, ttext...)"></div>
        <status-bar></status-bar>
      </div>`;
  }
}

Object.entries({
  'ui-icon': UiIcon, 'tool-row': ToolRow, 'tool-group': ToolGroup, 'tool-button': ToolButton, 'drop-down': DropDown,
  'side-rail': SideRail, 'survey-plan': SurveyPlan, 'section-title': SectionTitle, 'entity-card': EntityCard,
  'entity-list': EntityList, 'boundary-row': BoundaryRow, 'tech-table': TechTable, 'info-panel': InfoPanel,
  'status-bar': StatusBar, 'app-shell': AppShell
}).forEach(([name, cls]) => customElements.define(name, cls));
</script>
</body>
</html>
